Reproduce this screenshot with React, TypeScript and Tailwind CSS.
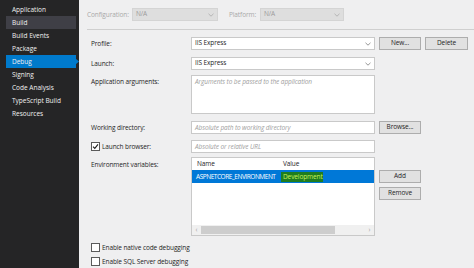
import React from "react";

const font = { fontFamily: '"Open Sans", "Noto Sans", sans-serif' };

function Chevron({ color = "#777" }: { color?: string }) {
  return (
    <svg width="6" height="4" viewBox="0 0 6 4" className="shrink-0">
      <path d="M0.5 0.8 L3 3.2 L5.5 0.8" fill="none" stroke={color} strokeWidth="0.9" />
    </svg>
  );
}

function Combo({ text, disabled, w }: { text: string; disabled?: boolean; w: string }) {
  return (
    <div
      className={`${w} h-[13px] flex items-center justify-between pl-[3px] pr-[3px] border ${
        disabled ? "bg-[#dedede] border-[#d4d4d4] text-[#9a9a9a]" : "bg-white border-[#c9c9c9] text-[#1e1e1e]"
      }`}
    >
      <span className="leading-none">{text}</span>
      <Chevron color={disabled ? "#b0b0b0" : "#8a8a8a"} />
    </div>
  );
}

function Btn({ text, w }: { text: string; w: string }) {
  return (
    <div className={`${w} h-[13px] flex items-center justify-center bg-[#e1e1e1] border border-[#adadad] text-[#1e1e1e] leading-none`}>
      {text}
    </div>
  );
}

function Check({ checked }: { checked?: boolean }) {
  return (
    <div className="w-[9px] h-[9px] border border-[#5a5a5a] bg-white flex items-center justify-center shrink-0">
      {checked && (
        <svg width="7" height="7" viewBox="0 0 7 7">
          <path d="M1 3.6 L2.8 5.4 L6 1.4" fill="none" stroke="#1e1e1e" strokeWidth="1.1" />
        </svg>
      )}
    </div>
  );
}

const navItems = [
  "Application",
  "Build",
  "Build Events",
  "Package",
  "Debug",
  "Signing",
  "Code Analysis",
  "TypeScript Build",
  "Resources",
];

export default function App() {
  return (
    <div className="w-[474px] h-[268px] flex overflow-hidden text-[6.5px]" style={font}>
      <div className="w-[79px] h-full bg-[#252526] pt-[3px] shrink-0">
        {navItems.map((n) => {
          const sel = n === "Debug";
          const hov = n === "Build";
          return (
            <div key={n} className="relative h-[13px] pl-[6px] pr-[3px]">
              <div
                className={`h-full flex items-center pl-[6px] text-[#f1f1f1] ${
                  sel ? "bg-[#007acc]" : hov ? "bg-[#3f3f46]" : ""
                }`}
              >
                {n}
              </div>
              {sel && (
                <svg width="4" height="7" viewBox="0 0 4 7" className="absolute right-[0px] top-[3px]">
                  <path d="M0 0 L4 3.5 L0 7 Z" fill="#007acc" />
                </svg>
              )}
            </div>
          );
        })}
      </div>
      <div className="flex-1 h-full bg-[#efeff0] text-[#1e1e1e] tracking-[-0.1px]">
        <div className="ml-[8px] h-[30px] border-b border-[#cfcfcf] flex items-start pt-[8px]">
          <span className="text-[#a8a8a8] w-[45px] mt-[2px]">Configuration:</span>
          <Combo text="N/A" disabled w="w-[86px]" />
          <span className="text-[#a8a8a8] ml-[11px] w-[31px] mt-[2px]">Platform:</span>
          <Combo text="N/A" disabled w="w-[84px]" />
        </div>
        <div className="pl-[12px] flex flex-col">
          <div className="flex items-center mt-[7px]">
            <span className="w-[100px]">Profile:</span>
            <Combo text="IIS Express" w="w-[184px]" />
            <div className="ml-[4px]"><Btn text="New..." w="w-[42px]" /></div>
            <div className="ml-[4px]"><Btn text="Delete" w="w-[43px]" /></div>
          </div>
          <div className="flex items-center mt-[7px]">
            <span className="w-[100px]">Launch:</span>
            <Combo text="IIS Express" w="w-[184px]" />
          </div>
          <div className="flex items-start mt-[5px]">
            <span className="w-[100px] mt-[2px]">Application arguments:</span>
            <div className="w-[184px] h-[39px] bg-white border border-[#c9c9c9] pl-[3px] pt-[1px] italic text-[#a0a0a0]">
              Arguments to be passed to the application
            </div>
          </div>
          <div className="flex items-center mt-[7px]">
            <span className="w-[100px]">Working directory:</span>
            <div className="w-[184px] h-[13px] bg-white border border-[#c9c9c9] pl-[3px] flex items-center italic text-[#a0a0a0]">
              Absolute path to working directory
            </div>
            <div className="ml-[4px]"><Btn text="Browse..." w="w-[42px]" /></div>
          </div>
          <div className="flex items-center mt-[6px]">
            <div className="w-[100px] flex items-center">
              <Check checked />
              <span className="ml-[2px]">Launch browser:</span>
            </div>
            <div className="w-[184px] h-[13px] bg-white border border-[#c9c9c9] pl-[3px] flex items-center italic text-[#a0a0a0]">
              Absolute or relative URL
            </div>
          </div>
          <div className="flex items-start mt-[4px]">
            <span className="w-[100px] mt-[3px]">Environment variables:</span>
            <div className="w-[184px] h-[79px] bg-white border border-[#c9c9c9] flex flex-col">
              <div className="h-[12px] flex items-center">
                <span className="w-[90px] pl-[5px]">Name</span>
                <span className="pl-[1px]">Value</span>
              </div>
              <div className="h-[13px] bg-[#0078d7] flex items-center">
                <span className="w-[89px] pl-[4px] text-white whitespace-nowrap tracking-[-0.45px]">ASPNETCORE_ENVIRONMENT</span>
                <span className="h-[10px] bg-[#1f7d1f] text-[#c9f25a] px-[2px] flex items-center w-[42px] whitespace-nowrap">Development</span>
              </div>
              <div className="flex-1" />
              <div className="h-[10px] bg-[#f0f0f0] flex items-center">
                <span className="w-[9px] text-center text-[#a0a0a0] leading-none">‹</span>
                <div className="w-[134px] h-[8px] bg-[#cdcdcd]" />
                <div className="flex-1" />
                <span className="w-[9px] text-center text-[#a0a0a0] leading-none">›</span>
              </div>
            </div>
            <div className="ml-[4px] flex flex-col mt-[13px] gap-[4px]">
              <Btn text="Add" w="w-[42px]" />
              <Btn text="Remove" w="w-[42px]" />
            </div>
          </div>
          <div className="flex items-center mt-[7px]">
            <Check />
            <span className="ml-[2px]">Enable native code debugging</span>
          </div>
          <div className="flex items-center mt-[4px]">
            <Check />
            <span className="ml-[2px]">Enable SQL Server debugging</span>
          </div>
        </div>
      </div>
    </div>
  );
}
